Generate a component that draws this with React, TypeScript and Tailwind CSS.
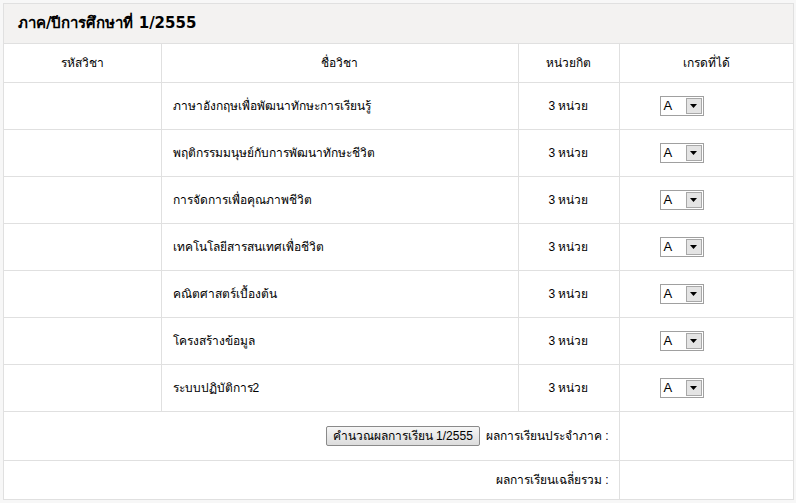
export default function App() {
  const rows = [
    "ภาษาอังกฤษเพื่อพัฒนาทักษะการเรียนรู้",
    "พฤติกรรมมนุษย์กับการพัฒนาทักษะชีวิต",
    "การจัดการเพื่อคุณภาพชีวิต",
    "เทคโนโลยีสารสนเทศเพื่อชีวิต",
    "คณิตศาสตร์เบื้องต้น",
    "โครงสร้างข้อมูล",
    "ระบบปฏิบัติการ2",
  ];
  const td = "border border-[#e0e0e0] text-[12px] text-black";
  return (
    <div className="w-[796px] h-[503px] bg-[#f7f7f7] pt-[3px] px-[3px]" style={{ fontFamily: '"Liberation Sans", "Noto Sans", sans-serif' }}>
      <div className="w-[791px] border border-[#e0e0e0] bg-white">
        <div className="h-[40px] bg-[#f3f2f1] flex items-center pl-[14px] text-[15px] font-bold text-black border-b border-[#e0e0e0]" style={{ fontFamily: '"DejaVu Sans", "Noto Sans", sans-serif' }}>
          ภาค/ปีการศึกษาที่ 1/2555
        </div>
        <table className="w-full border-collapse">
          <colgroup>
            <col className="w-[157px]" />
            <col className="w-[357px]" />
            <col className="w-[101px]" />
            <col />
          </colgroup>
          <tbody>
            <tr className="h-[38px]">
              <td className={`${td} text-center border-t-0 border-l-0`}>รหัสวิชา</td>
              <td className={`${td} text-center border-t-0`}>ชื่อวิชา</td>
              <td className={`${td} text-center border-t-0`}>หน่วยกิต</td>
              <td className={`${td} text-center border-t-0 border-r-0`}>เกรดที่ได้</td>
            </tr>
            {rows.map((r) => (
              <tr key={r} className="h-[47px]">
                <td className={`${td} border-l-0`}></td>
                <td className={`${td} pl-[11px]`}>{r}</td>
                <td className={`${td} text-center`}>3 หน่วย</td>
                <td className={`${td} border-r-0 pl-[40px]`}>
                  <div className="w-[44px] h-[20px] border border-[#a0a0a0] flex items-center bg-white">
                    <span className="flex-1 pl-[3px] text-[13px]">A</span>
                    <span className="w-[16px] h-[16px] mr-[1px] bg-[#e4e4e4] border border-[#a8a8a8] flex items-center justify-center">
                      <svg width="7" height="4" viewBox="0 0 7 4"><path d="M0 0h7L3.5 4z" fill="#000" /></svg>
                    </span>
                  </div>
                </td>
              </tr>
            ))}
            <tr className="h-[49px]">
              <td colSpan={3} className={`${td} border-l-0 text-right pr-[10px]`}>
                <button className="border border-[#8a8a8a] rounded-[2px] bg-gradient-to-b from-[#f6f6f6] to-[#dcdcdc] px-[6px] h-[20px] text-[12px] mr-[6px]">คำนวณผลการเรียน 1/2555</button>
                ผลการเรียนประจำภาค :
              </td>
              <td className={`${td} border-r-0`}></td>
            </tr>
            <tr className="h-[39px]">
              <td colSpan={3} className={`${td} border-l-0 border-b-0 text-right pr-[10px]`}>ผลการเรียนเฉลี่ยรวม :</td>
              <td className={`${td} border-r-0 border-b-0`}></td>
            </tr>
          </tbody>
        </table>
      </div>
    </div>
  );
}
